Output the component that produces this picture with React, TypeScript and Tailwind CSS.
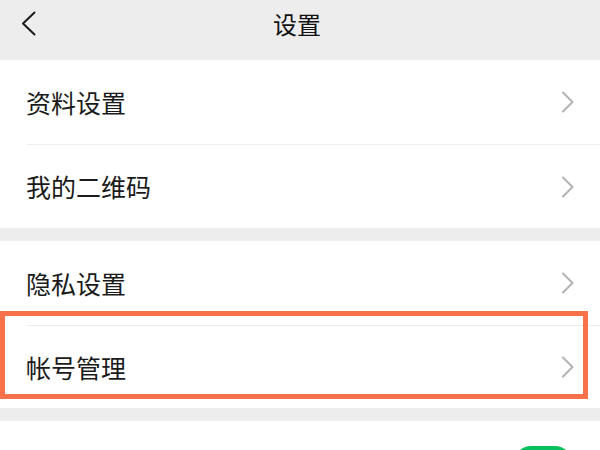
const FONT = `"Noto Sans CJK SC", "Noto Sans", sans-serif`;

function BackIcon() {
  return (
    <svg width="16" height="26" viewBox="0 0 16 26" className="block">
      <path
        d="M13.5 1.5 L2 12.5 L13.5 23.5"
        fill="none"
        stroke="#1a1a1a"
        strokeWidth="2"
        strokeLinecap="round"
        strokeLinejoin="round"
      />
    </svg>
  );
}

function Arrow() {
  return (
    <svg width="14" height="22" viewBox="0 0 14 22" className="block">
      <path
        d="M2 1.5 L11.5 11 L2 20.5"
        fill="none"
        stroke="#b2b2b2"
        strokeWidth="2"
        strokeLinecap="round"
        strokeLinejoin="round"
      />
    </svg>
  );
}

function Row({
  label,
  height = "h-[83px]",
  divider,
  highlight,
}: {
  label: string;
  height?: string;
  divider?: boolean;
  highlight?: boolean;
}) {
  return (
    <div className="relative">
      {divider && <div className="ml-[27px] h-px bg-[#ededed]" />}
      <div className={`flex items-center justify-between pl-[26px] pr-[25px] ${height}`}>
        <span className="text-[25px] leading-none text-[#1a1a1a]">{label}</span>
        <Arrow />
      </div>
      {/* annotation box drawn over the row */}
      {highlight && (
        <div className="pointer-events-none absolute left-0 top-[-14px] h-[88px] w-[588px] border-[5px] border-[#f8714a]" />
      )}
    </div>
  );
}

export default function App() {
  return (
    <div
      className="h-[450px] w-[600px] overflow-hidden bg-[#ededed]"
      style={{ fontFamily: FONT }}
    >
      {/* header */}
      <div className="relative flex h-[60px] items-center justify-center pb-[12px]">
        <div className="absolute left-[21px] top-[11px]">
          <BackIcon />
        </div>
        <span className="pr-[6px] text-[24px] leading-none text-[#111]">设置</span>
      </div>

      <div className="bg-white">
        <Row label="资料设置" height="h-[84px]" />
        <Row label="我的二维码" divider />
      </div>

      <div className="mt-[13px] bg-white">
        <Row label="隐私设置" height="h-[84px]" />
        <Row label="帐号管理" height="h-[82px]" divider highlight />
      </div>

      <div className="mt-[13px] h-[40px] bg-white">
        <div className="flex justify-end pr-[28px] pt-[25px]">
          <div className="h-[34px] w-[58px] rounded-full bg-[#07c160]" />
        </div>
      </div>
    </div>
  );
}
